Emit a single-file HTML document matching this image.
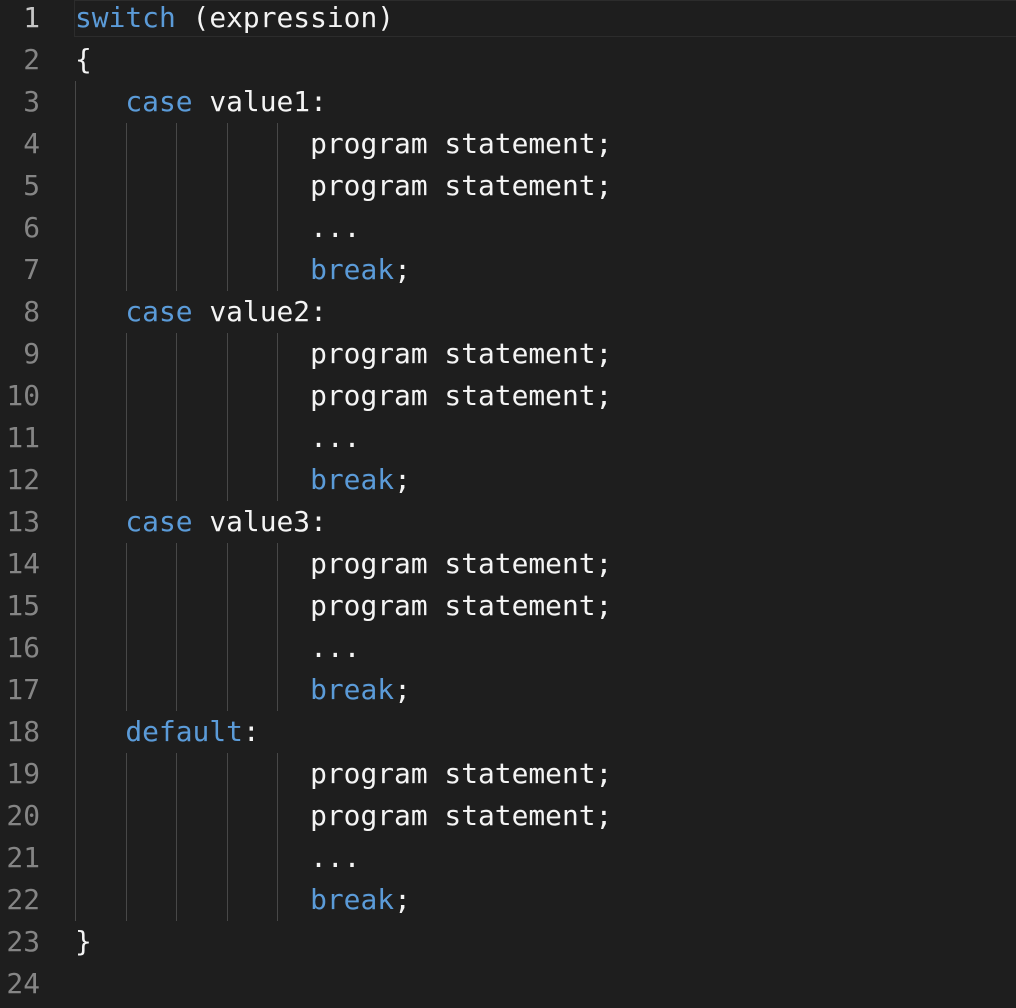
<!DOCTYPE html>
<html><head><meta charset="utf-8"><style>
html,body{margin:0;padding:0;background:#1e1e1e;width:1016px;height:1008px;overflow:hidden;position:relative;}
.ln{position:absolute;left:0;width:40px;text-align:right;height:42px;line-height:42px;font-family:"DejaVu Sans Mono","Liberation Mono",monospace;font-size:27.9px;color:#858585;}
.code{position:absolute;left:75px;height:42px;line-height:42px;font-family:"DejaVu Sans Mono","Liberation Mono",monospace;font-size:27.9px;color:#f4f4f4;white-space:pre;}
.k{color:#5b9bd8;}
.g{position:absolute;width:1px;background:#484848;}
.cur{position:absolute;left:74px;top:0px;width:950px;height:37px;border:1px solid #2c2c2c;box-sizing:border-box;}
</style></head><body>
<div class="cur"></div>
<div class="g" style="left:75px;top:81px;height:840px"></div>
<div class="g" style="left:126px;top:123px;height:168px"></div>
<div class="g" style="left:176px;top:123px;height:168px"></div>
<div class="g" style="left:227px;top:123px;height:168px"></div>
<div class="g" style="left:277px;top:123px;height:168px"></div>
<div class="g" style="left:126px;top:333px;height:168px"></div>
<div class="g" style="left:176px;top:333px;height:168px"></div>
<div class="g" style="left:227px;top:333px;height:168px"></div>
<div class="g" style="left:277px;top:333px;height:168px"></div>
<div class="g" style="left:126px;top:543px;height:168px"></div>
<div class="g" style="left:176px;top:543px;height:168px"></div>
<div class="g" style="left:227px;top:543px;height:168px"></div>
<div class="g" style="left:277px;top:543px;height:168px"></div>
<div class="g" style="left:126px;top:753px;height:168px"></div>
<div class="g" style="left:176px;top:753px;height:168px"></div>
<div class="g" style="left:227px;top:753px;height:168px"></div>
<div class="g" style="left:277px;top:753px;height:168px"></div>

<div class="ln" style="top:-3px;color:#c6c6c6">1</div><div class="code" style="top:-3px"><span class="k">switch</span> (expression)</div>
<div class="ln" style="top:39px">2</div><div class="code" style="top:39px">{</div>
<div class="ln" style="top:81px">3</div><div class="code" style="top:81px">   <span class="k">case</span> value1:</div>
<div class="ln" style="top:123px">4</div><div class="code" style="top:123px">              program statement;</div>
<div class="ln" style="top:165px">5</div><div class="code" style="top:165px">              program statement;</div>
<div class="ln" style="top:207px">6</div><div class="code" style="top:207px">              ...</div>
<div class="ln" style="top:249px">7</div><div class="code" style="top:249px">              <span class="k">break</span>;</div>
<div class="ln" style="top:291px">8</div><div class="code" style="top:291px">   <span class="k">case</span> value2:</div>
<div class="ln" style="top:333px">9</div><div class="code" style="top:333px">              program statement;</div>
<div class="ln" style="top:375px">10</div><div class="code" style="top:375px">              program statement;</div>
<div class="ln" style="top:417px">11</div><div class="code" style="top:417px">              ...</div>
<div class="ln" style="top:459px">12</div><div class="code" style="top:459px">              <span class="k">break</span>;</div>
<div class="ln" style="top:501px">13</div><div class="code" style="top:501px">   <span class="k">case</span> value3:</div>
<div class="ln" style="top:543px">14</div><div class="code" style="top:543px">              program statement;</div>
<div class="ln" style="top:585px">15</div><div class="code" style="top:585px">              program statement;</div>
<div class="ln" style="top:627px">16</div><div class="code" style="top:627px">              ...</div>
<div class="ln" style="top:669px">17</div><div class="code" style="top:669px">              <span class="k">break</span>;</div>
<div class="ln" style="top:711px">18</div><div class="code" style="top:711px">   <span class="k">default</span>:</div>
<div class="ln" style="top:753px">19</div><div class="code" style="top:753px">              program statement;</div>
<div class="ln" style="top:795px">20</div><div class="code" style="top:795px">              program statement;</div>
<div class="ln" style="top:837px">21</div><div class="code" style="top:837px">              ...</div>
<div class="ln" style="top:879px">22</div><div class="code" style="top:879px">              <span class="k">break</span>;</div>
<div class="ln" style="top:921px">23</div><div class="code" style="top:921px">}</div>
<div class="ln" style="top:963px">24</div>
</body></html>
